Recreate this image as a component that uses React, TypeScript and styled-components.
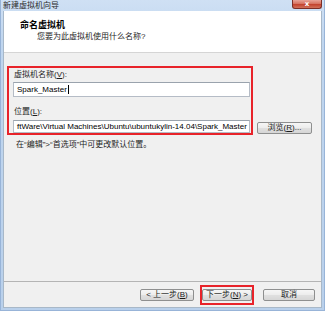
import styled, { createGlobalStyle } from "styled-components";

const GlobalStyle = createGlobalStyle`
  html, body {
    margin: 0;
    padding: 0;
    background: #ffffff;
  }
  body {
    font-family: "Liberation Sans", "Noto Sans CJK SC", sans-serif;
    font-size: 8px;
    color: #1e1e1e;
  }
`

const Window = styled.div`
  width: 325px;
  height: 311px;
  box-sizing: border-box;
  display: flex;
  flex-direction: column;
  padding: 0 2px 2px 2px;
  background: linear-gradient(to bottom, #cfe0f4 0px, #c0d6ef 40px, #b9d0eb 100%);
  border-left: 1px solid #98b4d8;
  border-right: 1px solid #98b4d8;
  border-bottom: 1px solid #98b4d8;
`

const TitleBar = styled.div`
  height: 11px;
  display: flex;
  align-items: flex-start;
  justify-content: space-between;

  .caption {
    font-size: 8px;
    line-height: 10px;
    color: #2b2b2b;
    margin-top: 1px;
  }
`

const CloseButton = styled.div`
  width: 30px;
  height: 9px;
  box-sizing: border-box;
  border: 1px solid #7d2f27;
  border-top: none;
  border-radius: 0 0 3px 3px;
  background: linear-gradient(to bottom, #e8a398 0%, #d77462 45%, #c3432f 55%, #d2705a 100%);
  display: flex;
  align-items: center;
  justify-content: center;
  color: #ffffff;
  font-family: "DejaVu Sans", sans-serif;
  font-size: 7px;
  font-weight: bold;
  line-height: 7px;
`

const Client = styled.div`
  flex: 1;
  display: flex;
  flex-direction: column;
  background: #f0f0f0;
  border-left: 1px solid #a8b8c8;
  border-right: 1px solid #a8b8c8;
  border-bottom: 1px solid #a8b8c8;
`

const Header = styled.div`
  background: #ffffff;
  border-bottom: 1px solid #d5d5d5;
  padding: 8px 0 0 16px;
  height: 33px;

  .title {
    font-size: 9px;
    line-height: 12px;
    font-weight: bold;
    color: #000000;
  }

  .subtitle {
    margin-top: 1px;
    margin-left: 17px;
    font-size: 8px;
    line-height: 10px;
  }
`

const Body = styled.div`
  padding: 13px 0 0 3px;
`

const FieldRow = styled.div`
  display: flex;
  align-items: flex-end;
  gap: 4px;
`

const Highlight = styled.div<{ $width: number }>`
  width: ${(p) => p.$width}px;
  box-sizing: border-box;
  border: 2px solid #e8232a;
`

const FieldGroup = styled.div`
  padding: 2px 1px 0 4px;
  display: flex;
  flex-direction: column;
`

const Label = styled.div<{ $gap: number }>`
  line-height: 10px;
  margin-left: 1px;
  margin-bottom: ${(p) => p.$gap}px;
`

const TextBox = styled.div<{ $height: number; $space: number }>`
  height: ${(p) => p.$height}px;
  box-sizing: border-box;
  background: #ffffff;
  border: 1px solid #b5bcc6;
  border-top-color: #9aa3ad;
  padding-left: 3px;
  display: flex;
  align-items: center;
  white-space: nowrap;
  overflow: hidden;
  font-size: 8px;
  color: #000000;
  margin-bottom: ${(p) => p.$space}px;

  .caret {
    display: inline-block;
    width: 1px;
    height: 9px;
    background: #000000;
    margin-left: 1px;
  }
`

const Button = styled.div<{ $width: number }>`
  width: ${(p) => p.$width}px;
  height: 12px;
  box-sizing: border-box;
  border: 1px solid #8e8f8f;
  border-radius: 2px;
  background: linear-gradient(to bottom, #f6f6f6 0%, #ececec 50%, #e0e0e0 51%, #d6d6d6 100%);
  display: flex;
  align-items: center;
  justify-content: center;
  font-size: 8px;
  line-height: 10px;
  color: #1a1a1a;
  white-space: nowrap;
`

const Note = styled.div`
  margin-top: 5px;
  padding-left: 9px;
  line-height: 10px;
`

const Spacer = styled.div`
  flex: 1;
`

const Footer = styled.div`
  height: 25px;
  border-top: 1px solid #b4b4b4;
  display: flex;
  align-items: center;
  justify-content: flex-end;
  padding-right: 6px;
`

const FocusMark = styled.div`
  border: 2px solid #e8232a;
  padding: 2px 0;
  width: 54px;
  box-sizing: border-box;
  display: flex;
  justify-content: center;
  margin: 0 9px 0 6px;
`

function App() {
  return (
    <>
      <GlobalStyle />
      <Window>
        <TitleBar>
          <span className="caption">新建虚拟机向导</span>
          <CloseButton>x</CloseButton>
        </TitleBar>
        <Client>
          <Header>
            <div className="title">命名虚拟机</div>
            <div className="subtitle">您要为此虚拟机使用什么名称?</div>
          </Header>
          <Body>
            <FieldRow>
              <Highlight $width={246}>
                <FieldGroup>
                  <Label $gap={2}>虚拟机名称(<u>V</u>):</Label>
                  <TextBox $height={15} $space={10}>
                    Spark_Master<span className="caret" />
                  </TextBox>
                  <Label $gap={3}>位置(<u>L</u>):</Label>
                  <TextBox $height={13} $space={0}>
                    ftWare\Virtual Machines\Ubuntu\ubuntukylin-14.04\Spark_Master
                  </TextBox>
                </FieldGroup>
              </Highlight>
              <Button $width={55} style={{ marginBottom: 1 }}>
                浏览(<u>R</u>)...
              </Button>
            </FieldRow>
            <Note>在“编辑”&gt;“首选项”中可更改默认位置。</Note>
          </Body>
          <Spacer />
          <Footer>
            <Button $width={54}>&lt; 上一步(<u>B</u>)</Button>
            <FocusMark>
              <Button $width={50}>下一步(<u>N</u>) &gt;</Button>
            </FocusMark>
            <Button $width={52}>取消</Button>
          </Footer>
        </Client>
      </Window>
    </>
  );
}

export default App;
